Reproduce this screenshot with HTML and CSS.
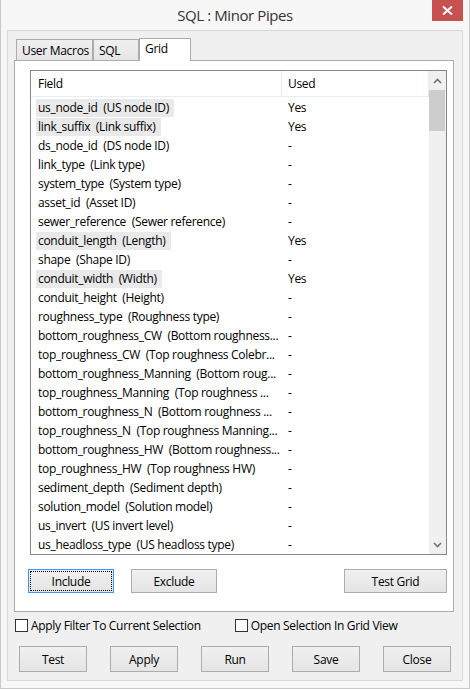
FILE: index.html
```html
<!DOCTYPE html>
<html>
<head>
<meta charset="utf-8">
<link rel="stylesheet" href="styles.css">
</head>
<body>
<div class="window">
  <div class="titlebar">
    <span class="title">SQL : Minor Pipes</span>
    <div class="close"><svg width="11" height="9" viewBox="0 0 11 9"><path d="M1 0.5 L10 8.5 M10 0.5 L1 8.5" stroke="#fff" stroke-width="2"/></svg></div>
  </div>
  <div class="panel">
    <div class="tabs">
      <div class="tab t1">User Macros</div>
      <div class="tab t2">SQL</div>
      <div class="tab active">Grid</div>
    </div>
    <div class="page">
      <div class="list">
        <div class="grid">
          <div class="header">
            <div class="hcell c1">Field</div>
            <div class="hcell c2">Used</div>
          </div>
          <div class="rows">
            <div class="row"><span class="c1"><span class="hl">us_node_id  (US node ID)</span></span><span class="c2">Yes</span></div>
            <div class="row"><span class="c1"><span class="hl">link_suffix  (Link suffix)</span></span><span class="c2">Yes</span></div>
            <div class="row"><span class="c1">ds_node_id  (DS node ID)</span><span class="c2">-</span></div>
            <div class="row"><span class="c1">link_type  (Link type)</span><span class="c2">-</span></div>
            <div class="row"><span class="c1">system_type  (System type)</span><span class="c2">-</span></div>
            <div class="row"><span class="c1">asset_id  (Asset ID)</span><span class="c2">-</span></div>
            <div class="row"><span class="c1">sewer_reference  (Sewer reference)</span><span class="c2">-</span></div>
            <div class="row"><span class="c1"><span class="hl">conduit_length  (Length)</span></span><span class="c2">Yes</span></div>
            <div class="row"><span class="c1">shape  (Shape ID)</span><span class="c2">-</span></div>
            <div class="row"><span class="c1"><span class="hl">conduit_width  (Width)</span></span><span class="c2">Yes</span></div>
            <div class="row"><span class="c1">conduit_height  (Height)</span><span class="c2">-</span></div>
            <div class="row"><span class="c1">roughness_type  (Roughness type)</span><span class="c2">-</span></div>
            <div class="row"><span class="c1">bottom_roughness_CW  (Bottom roughness...</span><span class="c2">-</span></div>
            <div class="row"><span class="c1">top_roughness_CW  (Top roughness Colebr...</span><span class="c2">-</span></div>
            <div class="row"><span class="c1">bottom_roughness_Manning  (Bottom roug...</span><span class="c2">-</span></div>
            <div class="row"><span class="c1">top_roughness_Manning  (Top roughness ...</span><span class="c2">-</span></div>
            <div class="row"><span class="c1">bottom_roughness_N  (Bottom roughness ...</span><span class="c2">-</span></div>
            <div class="row"><span class="c1">top_roughness_N  (Top roughness Manning...</span><span class="c2">-</span></div>
            <div class="row"><span class="c1">bottom_roughness_HW  (Bottom roughness...</span><span class="c2">-</span></div>
            <div class="row"><span class="c1">top_roughness_HW  (Top roughness HW)</span><span class="c2">-</span></div>
            <div class="row"><span class="c1">sediment_depth  (Sediment depth)</span><span class="c2">-</span></div>
            <div class="row"><span class="c1">solution_model  (Solution model)</span><span class="c2">-</span></div>
            <div class="row"><span class="c1">us_invert  (US invert level)</span><span class="c2">-</span></div>
            <div class="row"><span class="c1">us_headloss_type  (US headloss type)</span><span class="c2">-</span></div>
          </div>
        </div>
        <div class="scrollbar">
          <div class="arrow"><svg width="9" height="6" viewBox="0 0 9 6"><path d="M1 5 L4.5 1.5 L8 5" fill="none" stroke="#707070" stroke-width="1.6"/></svg></div>
          <div class="track"><div class="thumb"></div></div>
          <div class="arrow"><svg width="9" height="6" viewBox="0 0 9 6"><path d="M1 1 L4.5 4.5 L8 1" fill="none" stroke="#707070" stroke-width="1.6"/></svg></div>
        </div>
      </div>
      <div class="btnrow">
        <button class="btn focus w86"><span class="inner">Include</span></button>
        <button class="btn w86 gap18">Exclude</button>
        <button class="btn w103 push">Test Grid</button>
      </div>
    </div>
    <div class="checks">
      <label class="check"><span class="box"></span>Apply Filter To Current Selection</label>
      <label class="check second"><span class="box"></span>Open Selection In Grid View</label>
    </div>
    <div class="actions">
      <button class="btn big">Test</button>
      <button class="btn big">Apply</button>
      <button class="btn big">Run</button>
      <button class="btn big">Save</button>
      <button class="btn big">Close</button>
    </div>
  </div>
</div>
</body>
</html>
```
FILE: styles.css
```css
* { box-sizing: border-box; }
html, body { margin: 0; padding: 0; }
body {
  font-family: "Open Sans", "Noto Sans", sans-serif;
  font-size: 12px;
  letter-spacing: -0.3px;
  color: #000;
  background: #f7f7f7;
}
.window {
  width: 470px;
  height: 689px;
  background: #f7f7f7;
  border: 1px solid #c9c9c9;
  border-top: none;
  display: flex;
  flex-direction: column;
}
.titlebar {
  height: 30px;
  position: relative;
  display: flex;
  align-items: center;
  justify-content: center;
}
.title {
  font-size: 15px;
  letter-spacing: -0.4px;
  color: #333;
  margin-top: -1px;
}
.close {
  position: absolute;
  top: 0;
  right: 6px;
  width: 31px;
  height: 21px;
  background: #c75050;
  display: flex;
  align-items: center;
  justify-content: center;
}
.panel {
  margin: 0 6px 0 6px;
  height: 651px;
  background: #f0f0f0;
  border: 1px solid #d9d9d9;
  padding: 7px 8px 0 6px;
  display: flex;
  flex-direction: column;
}
.tabs {
  display: flex;
  align-items: flex-end;
  height: 23px;
  padding-left: 2px;
  position: relative;
  z-index: 1;
  margin-bottom: -1px;
}
.tab {
  height: 21px;
  border: 1px solid #acacac;
  border-bottom: none;
  background: linear-gradient(#f0f0f0, #e5e5e5);
  padding: 1px 0 0 5px;
  line-height: 19px;
  margin-bottom: 1px;
}
.t1 { width: 77px; }
.t2 { width: 46px; margin-left: 0; }
.tab.active {
  width: 52px;
  height: 23px;
  margin-bottom: 0;
  background: #fff;
  padding: 0 0 0 5px;
  line-height: 19px;
}
.page {
  height: 552px;
  background: #fff;
  border: 1px solid #acacac;
  padding: 9px 6px 0 15px;
  display: flex;
  flex-direction: column;
}
.list {
  height: 485px;
  border: 1px solid #828790;
  display: flex;
}
.grid {
  flex: 1;
  display: flex;
  flex-direction: column;
}
.header {
  height: 26px;
  display: flex;
  border-bottom: 1px solid #e5eef8;
  border-right: 1px solid #e5eef8;
}
.hcell {
  line-height: 26px;
}
.c1 {
  width: 251px;
  padding-left: 7px;
  white-space: pre;
  overflow: hidden;
  flex-shrink: 0;
}
.c2 {
  padding-left: 6px;
}
.hcell.c1 { border-right: 1px solid #e5eef8; }
.row {
  height: 19px;
  display: flex;
  align-items: center;
  line-height: 18px;
}
.row .c1 { padding-left: 5px; }
.hl {
  display: inline-block;
  background: #e9e9e9;
  padding: 0 5px 0 2px;
  line-height: 18px;
}
.row .c1:not(:has(.hl)) { padding-left: 7px; }
.rows { padding-top: 1px; }
.scrollbar {
  width: 17px;
  background: #f0f0f0;
  display: flex;
  flex-direction: column;
}
.arrow {
  height: 19px;
  display: flex;
  align-items: center;
  justify-content: center;
}
.track {
  flex: 1;
}
.thumb {
  height: 41px;
  width: 16px;
  background: #cdcdcd;
}
.btnrow {
  display: flex;
  margin-top: 14px;
  margin-left: -2px;
  margin-right: 0px;
}
.btn {
  font-family: inherit;
  font-size: 12px;
  letter-spacing: -0.3px;
  color: #000;
  height: 24px;
  border: 1px solid #acacac;
  background: linear-gradient(#f0f0f0, #e5e5e5);
  padding: 0;
  border-radius: 0;
  display: flex;
  align-items: center;
  justify-content: center;
}
.w86 { width: 86px; }
.w103 { width: 103px; }
.gap18 { margin-left: 17px; }
.push { margin-left: auto; }
.btn.focus {
  border-color: #3399ff;
  padding: 1px;
}
.btn.focus .inner {
  flex: 1;
  align-self: stretch;
  border: 1px dotted #000;
  display: flex;
  align-items: center;
  justify-content: center;
}
.checks {
  display: flex;
  margin-top: 7px;
  margin-left: 1px;
  height: 13px;
  align-items: center;
}
.check {
  display: flex;
  align-items: center;
  white-space: nowrap;
}
.box {
  width: 13px;
  height: 13px;
  border: 1px solid #333;
  background: #fff;
  margin-right: 3px;
}
.check.second { margin-left: 34px; }
.actions {
  display: flex;
  margin-top: 14px;
  padding-left: 5px;
  gap: 23px;
}
.btn.big {
  width: 68px;
  height: 26px;
}
```
